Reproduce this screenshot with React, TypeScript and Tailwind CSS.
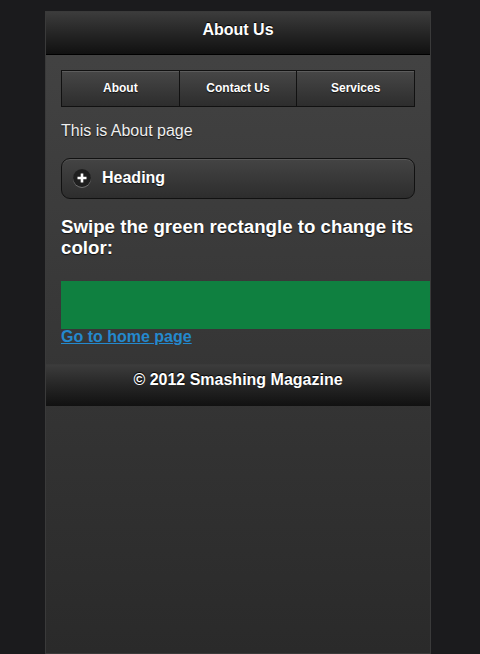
import React from 'react'

const font = { fontFamily: '"Liberation Sans", Arial, sans-serif' }

const navItems = ['About', 'Contact Us', 'Services']

export default function App() {
  return (
    <div className="min-h-[654px] bg-[#1b1b1d] pt-[11px]" style={font}>
      <div className="ml-[45px] w-[386px] min-h-[643px] border border-[#3a3a3a] bg-gradient-to-b from-[#444444] to-[#2a2a2a] text-white [text-shadow:0_1px_1px_#111]">
        {/* header */}
        <div className="h-[43px] border-b border-black bg-gradient-to-b from-[#3c3c3c] to-[#111111] pt-[9px] text-center">
          <h1 className="text-base leading-[18px] font-bold [text-shadow:0_-1px_1px_#000]">About Us</h1>
        </div>

        <div className="px-[15px] pt-[15px] pb-[19px]">
          {/* navbar */}
          <div className="flex h-[37px] border border-[#111]">
            {navItems.map((item, i) => (
              <div
                key={item}
                className={`flex-1 flex items-center justify-center pb-[2px] text-xs font-bold bg-gradient-to-b from-[#474747] to-[#2d2d2d] shadow-[inset_0_1px_0_rgba(255,255,255,0.12)] ${i > 0 ? 'border-l border-[#111]' : ''}`}
              >
                {item}
              </div>
            ))}
          </div>

          <p className="mt-[15px] text-base leading-[18px] text-[#eee]">This is About page</p>

          {/* collapsible */}
          <div className="mt-[18px] h-[41px] rounded-[9px] border border-[#111] bg-gradient-to-b from-[#444] to-[#2d2d2d] shadow-[inset_0_1px_0_rgba(255,255,255,0.1)] flex items-center pl-[11px] pb-[2px]">
            <span className="w-[18px] h-[18px] rounded-full bg-[#1f1f1f] shadow-[0_1px_0_rgba(255,255,255,0.3)] flex items-center justify-center">
              <svg width="12" height="12" viewBox="0 0 12 12">
                <path d="M6 1.5v9M1.5 6h9" stroke="#fff" strokeWidth="2.6" />
              </svg>
            </span>
            <span className="ml-[11px] text-base font-bold">Heading</span>
          </div>

          <h3 className="mt-[17px] text-[18.7px] leading-[21px] font-bold">
            Swipe the green rectangle to change its color:
          </h3>

          <div className="mt-[23px] h-[48px] w-[369px] bg-[#0f8040]" />

          <a href="#" className="block text-base font-bold leading-[16px] text-[#2489ce] underline [text-shadow:none]">
            Go to home page
          </a>
        </div>

        {/* footer */}
        <div className="h-[42px] border-t border-[#3a3a3a] bg-gradient-to-b from-[#3c3c3c] to-[#111111] pt-[6px] text-center">
          <h4 className="text-base leading-[18px] font-bold [text-shadow:0_-1px_1px_#000]">© 2012 Smashing Magazine</h4>
        </div>
      </div>
    </div>
  )
}
